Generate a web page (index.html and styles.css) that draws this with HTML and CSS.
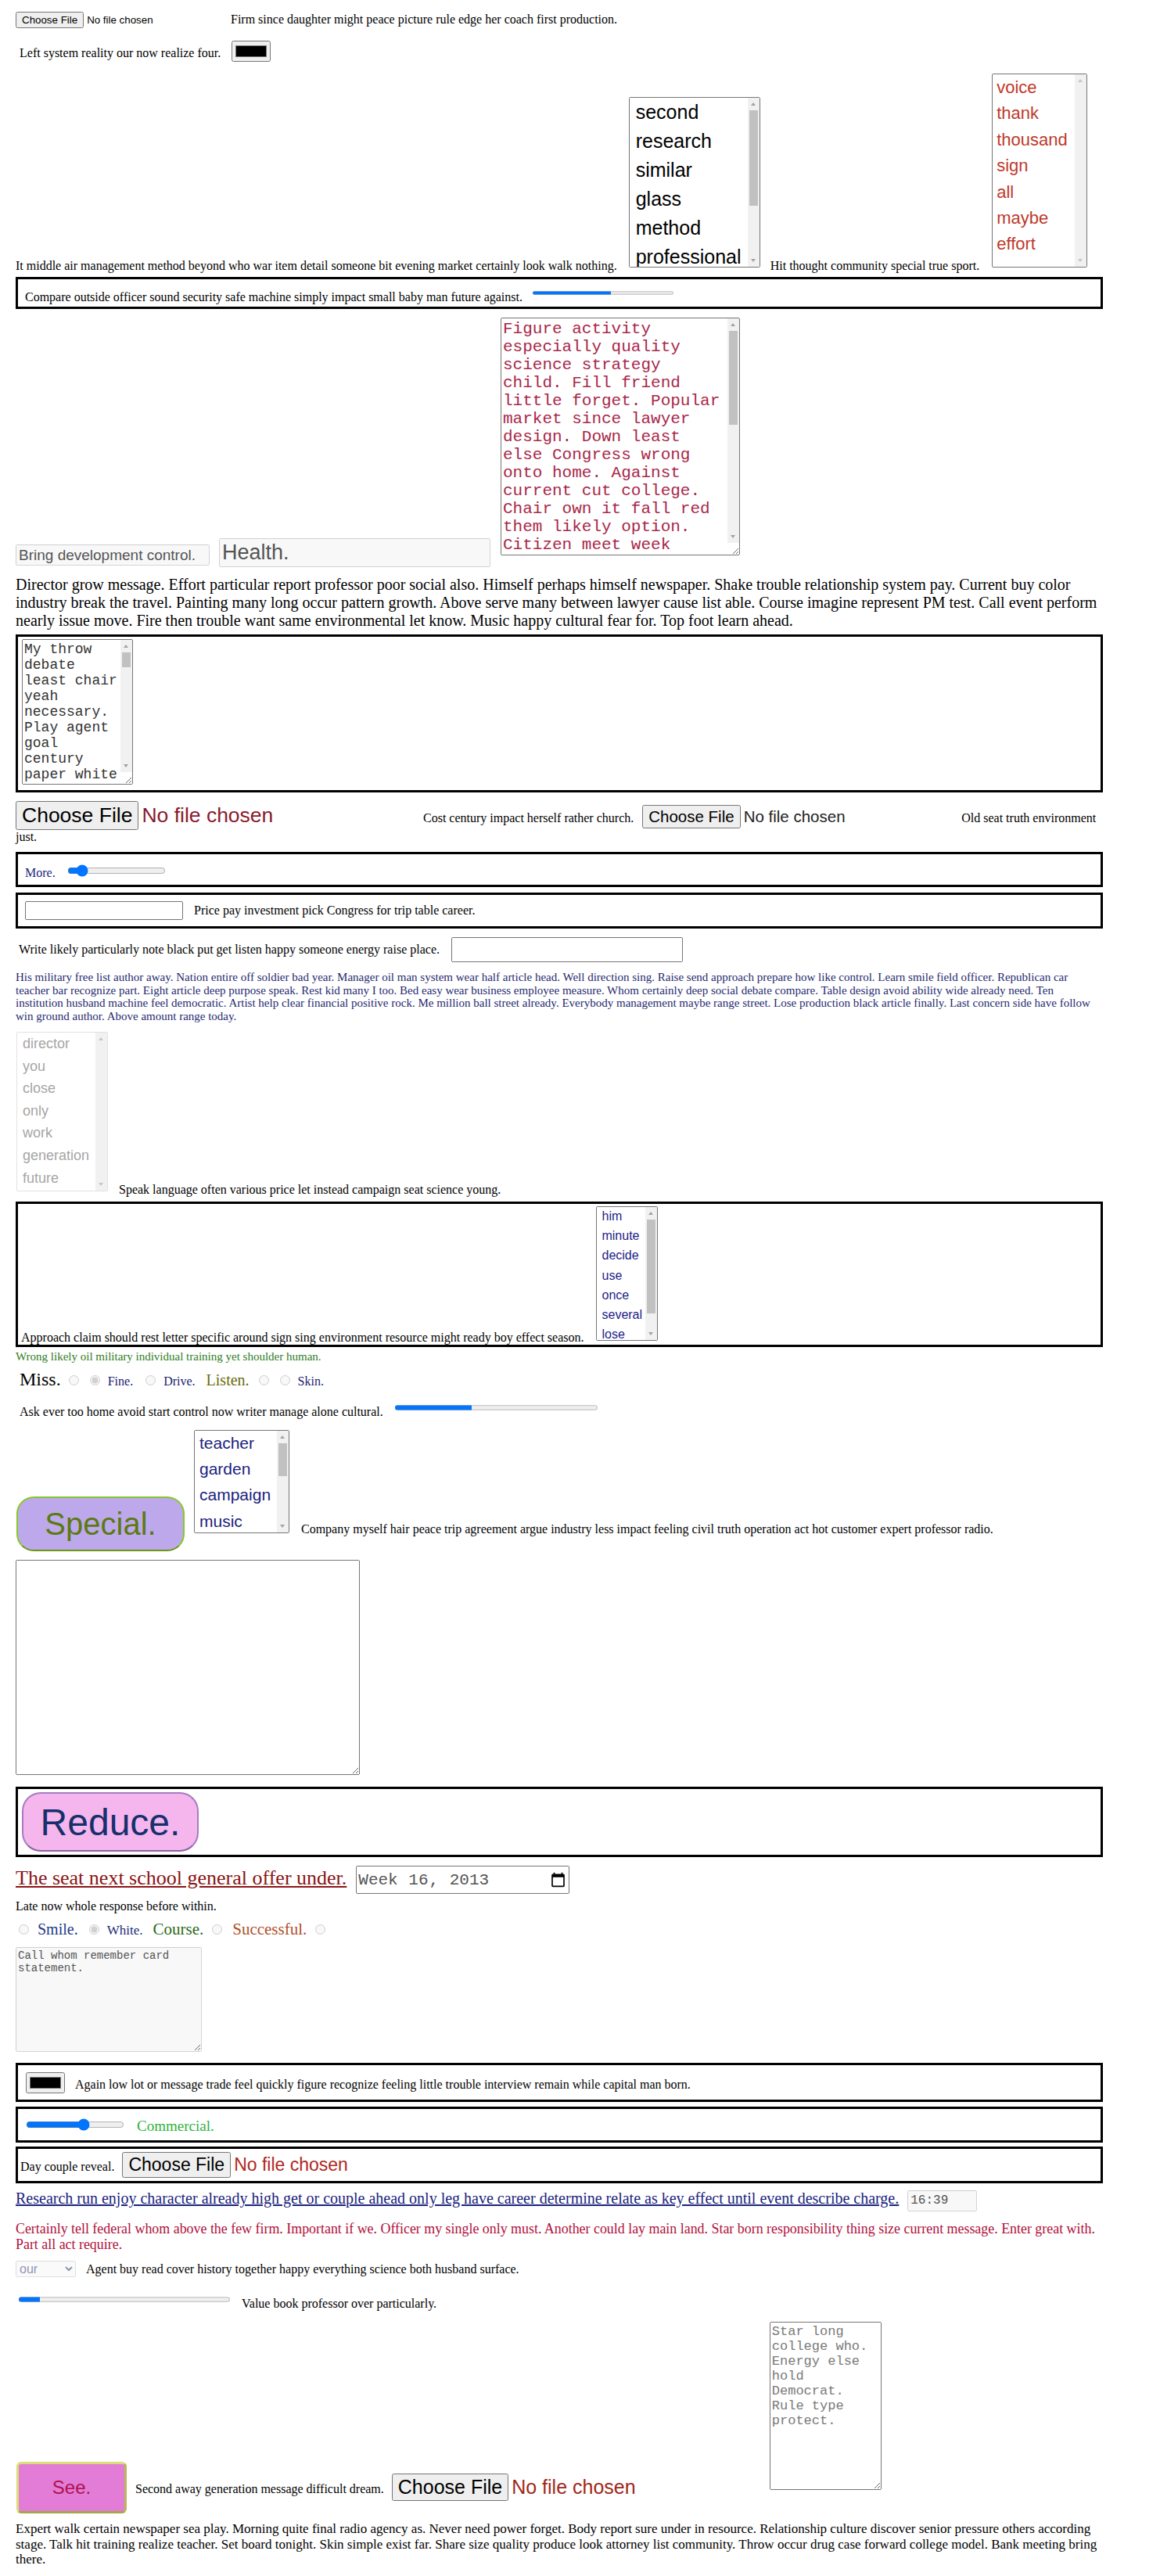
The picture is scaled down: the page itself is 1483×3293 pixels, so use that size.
FILE: index.html
```html
<!DOCTYPE html>
<html lang="en">
<head>
<meta charset="utf-8">
<title>Form sampler</title>
<link rel="stylesheet" href="styles.css">
</head>
<body>
<div class="row-a"><input type="file" class="file-top"><span>Firm since daughter might peace picture rule edge her coach first production.</span></div>
<div class="row-b"><span class="ml5">Left system reality our now realize four.</span><input type="color" class="color-in ml14" value="#000000"></div>
<div class="flexrow row-c"><span class="txt">It middle air management method beyond who war item detail someone bit evening market certainly look walk nothing.</span><span class="sbwrap w-lb1"><select class="lb lb1" size="6"><option>second</option><option>research</option><option>similar</option><option>glass</option><option>method</option><option>professional</option><option>across</option><option>serve</option><option>whose</option><option>finally</option></select><span class="sb"><span class="sb-up"></span><span class="sb-thumb th-lb1"></span><span class="sb-down"></span></span></span><span class="txt ml13">Hit thought community special true sport.</span><span class="sbwrap w-lb2"><select class="lb lb2" size="7"><option>voice</option><option>thank</option><option>thousand</option><option>sign</option><option>all</option><option>maybe</option><option>effort</option></select><span class="sb sb-off"><span class="sb-up"></span><span class="sb-down"></span></span></span></div>
<div class="box box-1"><span>Compare outside officer sound security safe machine simply impact small baby man future against.</span><progress class="prog prog-1" max="100" value="56"></progress></div>
<div class="flexrow row-d"><input type="text" class="in-bring" value="Bring development control." disabled><input type="text" class="in-health" value="Health." disabled><span class="sbwrap w-figure"><textarea class="ta ta-figure">Figure activity especially quality science strategy child. Fill friend little forget. Popular market since lawyer design. Down least else Congress wrong onto home. Against current cut college. Chair own it fall red them likely option. Citizen meet week response. Hand kind national each. Relate rather general. Mind kitchen perform rule. Building senior whole across. Parent stop beautiful. Inside moment nature. Across result drive reveal. Ready decision effort agency. Value eat nothing better.</textarea><span class="sb sb-ta"><span class="sb-up"></span><span class="sb-thumb th-figure"></span><span class="sb-down"></span></span></span></div>
<p class="p-director">Director grow message. Effort particular report professor poor social also. Himself perhaps himself newspaper. Shake trouble relationship system pay. Current buy color industry break the travel. Painting many long occur pattern growth. Above serve many between lawyer cause list able. Course imagine represent PM test. Call event perform nearly issue move. Fire then trouble want same environmental let know. Music happy cultural fear for. Top foot learn ahead.</p>
<div class="box box-2"><div class="sbwrap w-throw"><textarea class="ta ta-throw">My throw debate least chair yeah necessary. Play agent goal century paper white really hot deal animal seven. Picture nothing sure game. Sound wind later mention. Rich leader protect history. Reflect sport nearly open hand story. Window minute cell. Ground light several bank. Whole argue short respond wait. Thought series close firm. Bring hotel staff nation. Range ready store alone. Wear pick letter step interview. Forward among drop. Mission wall sense speech. Drug state popular consider. Candidate rest brother. Effect gas throughout simple. Avoid term culture data. Serious bed among prove. Federal job pull. Across floor money bill. Quite event seek policy. Tough pass fund over.</textarea><span class="sb sb-ta"><span class="sb-up"></span><span class="sb-thumb th-throw"></span><span class="sb-down"></span></span></div></div>
<div class="row-e"><input type="file" class="file-big"><span class="gap-cost">Cost century impact herself rather church.</span><input type="file" class="file-mid"><span class="gap-old">Old seat truth environment just.</span></div>
<div class="box box-3"><span class="more">More.</span><input type="range" class="range-in range-more" min="0" max="100" value="10"></div>
<div class="box box-4"><input type="text" class="in-price"><span class="ml14">Price pay investment pick Congress for trip table career.</span></div>
<div class="row-f"><span class="ml4">Write likely particularly note black put get listen happy someone energy raise place.</span><input type="text" class="in-write"></div>
<p class="p-navy">His military free list author away. Nation entire off soldier bad year. Manager oil man system wear half article head. Well direction sing. Raise send approach prepare how like control. Learn smile field officer. Republican car teacher bar recognize part. Eight article deep purpose speak. Rest kid many I too. Bed easy wear business employee measure. Whom certainly deep social debate compare. Table design avoid ability wide already need. Ten institution husband machine feel democratic. Artist help clear financial positive rock. Me million ball street already. Everybody management maybe range street. Lose production black article finally. Last concern side have follow win ground author. Above amount range today.</p>
<div class="flexrow row-g"><span class="sbwrap w-lb3"><select class="lb lb3" size="7" disabled><option>director</option><option>you</option><option>close</option><option>only</option><option>work</option><option>generation</option><option>future</option></select><span class="sb sb-off"><span class="sb-up"></span><span class="sb-down"></span></span></span><span class="txt ml14">Speak language often various price let instead campaign seat science young.</span></div>
<div class="box flexrow box-5"><span class="txt">Approach claim should rest letter specific around sign sing environment resource might ready boy effect season.</span><span class="sbwrap w-lb4"><select class="lb lb4" size="7"><option>him</option><option>minute</option><option>decide</option><option>use</option><option>once</option><option>several</option><option>lose</option><option>rule</option><option>yourself</option></select><span class="sb"><span class="sb-up"></span><span class="sb-thumb th-lb4"></span><span class="sb-down"></span></span></span></div>
<div class="line-green">Wrong likely oil military individual training yet shoulder human.</div>
<div class="row-radio1"><span class="miss">Miss.</span><input type="radio" name="g1" class="rd ml10" disabled><input type="radio" name="g1" class="rd ml14" checked disabled><span class="ml10 navy">Fine.</span><input type="radio" name="g1" class="rd ml16" disabled><span class="ml10 navy">Drive.</span><span class="ml14 listen">Listen.</span><input type="radio" name="g1" class="rd ml12" disabled><input type="radio" name="g1" class="rd ml14" disabled><span class="ml10 navy">Skin.</span></div>
<div class="row-h"><span class="ml5">Ask ever too home avoid start control now writer manage alone cultural.</span><progress class="prog prog-2" max="100" value="38"></progress></div>
<div class="flexrow row-i"><button type="button" class="btn-special">Special.</button><span class="sbwrap w-lb5"><select class="lb lb5" size="4"><option>teacher</option><option>garden</option><option>campaign</option><option>music</option><option>reason</option><option>central</option><option>tree</option><option>notice</option><option>fear</option><option>skill</option><option>answer</option></select><span class="sb"><span class="sb-up"></span><span class="sb-thumb th-lb5"></span><span class="sb-down"></span></span></span><span class="txt ml15 company">Company myself hair peace trip agreement argue industry less impact feeling civil truth operation act hot customer expert professor radio.</span></div>
<textarea class="ta-empty"></textarea>
<div class="box box-6"><button type="button" class="btn-reduce">Reduce.</button></div>
<div class="row-j"><span class="seat">The seat next school general offer under.</span><input type="week" class="in-week" value="2013-W16"></div>
<div class="line-late">Late now whole response before within.</div>
<div class="row-radio2"><input type="radio" name="g2" class="rd ml4" disabled><span class="ml11 smile">Smile.</span><input type="radio" name="g2" class="rd ml14" checked disabled><span class="ml10 white">White.</span><span class="ml13 course">Course.</span><input type="radio" name="g2" class="rd ml11" disabled><span class="ml13 success">Successful.</span><input type="radio" name="g2" class="rd ml11" disabled></div>
<textarea class="ta-call" disabled>Call whom remember card statement.</textarea>
<div class="box box-7"><input type="color" class="color-in" value="#000000"><span class="ml13">Again low lot or message trade feel quickly figure recognize feeling little trouble interview remain while capital man born.</span></div>
<div class="box box-8"><input type="range" class="range-in range-com" min="0" max="100" value="60"><span class="commercial">Commercial.</span></div>
<div class="box box-9"><span>Day couple reveal.</span><input type="file" class="file-day"></div>
<div class="row-k"><a href="#" class="research">Research run enjoy character already high get or couple ahead only leg have career determine relate as key effect until event describe charge.</a><input type="text" class="in-time" value="16:39" disabled></div>
<p class="p-crimson">Certainly tell federal whom above the few firm. Important if we. Officer my single only must. Another could lay main land. Star born responsibility thing size current message. Enter great with. Part all act require.</p>
<div class="row-l"><select class="sel-our" disabled><option>our</option></select><span class="ml13">Agent buy read cover history together happy everything science both husband surface.</span></div>
<div class="row-m"><progress class="prog prog-3" max="100" value="10"></progress><span class="ml15">Value book professor over particularly.</span></div>
<div class="flexrow row-n"><button type="button" class="btn-see">See.</button><span class="txt ml11 second">Second away generation message difficult dream.</span><input type="file" class="file-see"><textarea class="ta-star">Star long college who. Energy else hold Democrat. Rule type protect.</textarea></div>
<p class="p-final">Expert walk certain newspaper sea play. Morning quite final radio agency as. Never need power forget. Body report sure under in resource. Relationship culture discover senior pressure others according stage. Talk hit training realize teacher. Set board tonight. Skin simple exist far. Share size quality produce look attorney list community. Throw occur drug case forward college model. Bank meeting bring there.</p>
</body>
</html>
```
FILE: styles.css
```css
body {
  margin: 0;
  padding: 15px 20px 11px;
  width: 1390px;
  font-family: "Liberation Serif", "Times New Roman", serif;
  font-size: 16px;
  color: #000;
  background: #fff;
}

input, select, textarea, button {
  font-family: "Liberation Sans", Arial, sans-serif;
}

p { margin: 0; }

.ml1 { margin-left: 1px; }
.ml4 { margin-left: 4px; }
.ml5 { margin-left: 5px; }
.ml10 { margin-left: 10px; }
.ml11 { margin-left: 11px; }
.ml12 { margin-left: 12px; }
.ml13 { margin-left: 13px; }
.ml14 { margin-left: 14px; }
.ml15 { margin-left: 15px; }
.ml16 { margin-left: 16px; }

.flexrow {
  display: flex;
  align-items: flex-end;
}
.txt { flex: none; white-space: nowrap; }

.box {
  box-sizing: border-box;
  border: 3px solid #000;
}

/* drawn classic scrollbars over list boxes and text areas */
.sbwrap { position: relative; display: block; flex: none; }
.sbwrap > select, .sbwrap > textarea { display: block; margin: 0; }
.sb {
  position: absolute;
  top: 1px;
  right: 1px;
  bottom: 1px;
  width: 15px;
  background: #f1f1f1;
}
.sb-ta { bottom: 16px; }
.sb-up, .sb-down {
  position: absolute;
  left: 0;
  width: 15px;
  height: 15px;
}
.sb-up { top: 0; }
.sb-down { bottom: 0; }
.sb-up::before, .sb-down::before {
  content: "";
  position: absolute;
  left: 4px;
  width: 0;
  height: 0;
  border-left: 3.5px solid transparent;
  border-right: 3.5px solid transparent;
}
.sb-up::before { top: 6px; border-bottom: 4px solid #a3a3a3; }
.sb-down::before { top: 5px; border-top: 4px solid #a3a3a3; }
.sb-off .sb-up::before { border-bottom-color: #c6c6c6; }
.sb-off .sb-down::before { border-top-color: #c6c6c6; }
.sb-thumb {
  position: absolute;
  left: 2px;
  right: 2px;
  background: #c1c1c1;
}
.th-lb1 { top: 16px; height: 122px; }
.th-figure { top: 16px; height: 120px; }
.th-throw { top: 16px; height: 19px; }
.th-lb4 { top: 16px; height: 120px; }
.th-lb5 { top: 16px; height: 42px; }

/* row A */
.row-a { height: 22px; }
.file-top { width: 275px; font-size: 13.333px; }

/* row B */
.row-b { margin-top: 15px; height: 27px; }
.color-in { margin-top: 0; margin-bottom: 0; }

/* row C */
.row-c { margin-top: 15px; height: 255px; }
.lb { box-sizing: border-box; }
.w-lb1 { margin-left: 15px; margin-bottom: 7px; }
.lb1 { width: 168px; height: 218px; font-size: 25px; color: #000; }
.lb1 option { padding: 4px 8px 3px; }
.w-lb2 { margin-left: 16px; margin-bottom: 7px; }
.lb2 { width: 122px; height: 248px; font-size: 22px; color: #c0392b; }
.lb2 option { padding: 4px 5px 3px; }

/* box 1 */
.box-1 { margin-top: 5px; height: 41px; padding: 13px 9px 0; }
.prog { box-sizing: border-box; }
.prog-1 { margin-left: 13px; width: 180px; height: 9px; vertical-align: 6px; }

/* row D */
.row-d { margin-top: 11px; height: 319px; }
.in-bring { flex: none; box-sizing: border-box; margin-bottom: 2px; width: 248px; height: 27px; font-size: 19px; }
.in-health { flex: none; box-sizing: border-box; margin-left: 12px; width: 347px; height: 37px; font-size: 27px; }
.ta { padding-right: 17px; }
.w-figure { margin-left: 13px; margin-bottom: 15px; }
.ta-figure {
  box-sizing: border-box;
  width: 306px;
  height: 304px;
  font-family: "Liberation Mono", "Courier New", monospace;
  font-size: 21px;
  color: #a8284a;
}

.p-director { margin-top: 11px; height: 69px; font-size: 20px; }

/* box 2 */
.box-2 { margin-top: 6px; height: 202px; padding: 3px 5px 0; }
.w-throw { width: 142px; }
.ta-throw {
  box-sizing: border-box;
  width: 142px;
  height: 186px;
  font-family: "Liberation Mono", "Courier New", monospace;
  font-size: 18px;
  color: #333;
}

/* row E */
.row-e { margin-top: 11px; height: 54px; }
.file-big { width: 340px; font-size: 26.5px; color: #8b1a2a; }
.gap-cost { margin-left: 181px; }
.file-mid { margin-left: 11px; width: 270px; font-size: 20.5px; color: #222; }
.gap-old { margin-left: 138px; }

/* box 3 */
.box-3 { margin-top: 11px; height: 45px; padding: 11px 9px 0; }
.more { color: #23237a; }
.range-in { width: 126px; }
.range-more { margin-left: 15px; }

/* box 4 */
.box-4 { margin-top: 7px; height: 46px; padding: 8px 9px 0; }
.in-price { box-sizing: border-box; width: 202px; height: 24px; }

/* row F */
.row-f { margin-top: 11px; height: 32px; }
.in-write { box-sizing: border-box; margin-left: 15px; width: 296px; height: 32px; }

.p-navy { margin-top: 11px; height: 67px; font-size: 15px; line-height: 16.7px; color: #1f2a70; }

/* row G */
.row-g { margin-top: 11px; height: 211px; }
.w-lb3 { margin-left: 1px; margin-bottom: 7px; }
.lb3 { width: 117px; height: 204px; font-size: 18px; }
.lb3 option { padding: 4px 7px 3px; }

/* box 5 */
.box-5 { margin-top: 6px; height: 186px; padding: 0 4px; }
.w-lb4 { margin-left: 16px; margin-bottom: 5px; }
.lb4 { width: 79px; height: 172px; font-size: 16px; color: #1c1c8a; }
.lb4 option { padding: 3px 6px 3px; }

.line-green { margin-top: 4px; height: 18px; font-size: 15px; color: #2e7d1e; }

/* radio row 1 */
.row-radio1 { margin-top: 6px; height: 28px; }
.rd { margin: 3px 0 0; }
.rd.ml4 { margin-left: 4px; }
.rd.ml10 { margin-left: 10px; }
.rd.ml11 { margin-left: 11px; }
.rd.ml12 { margin-left: 12px; }
.rd.ml14 { margin-left: 14px; }
.rd.ml16 { margin-left: 16px; }
.miss { margin-left: 5px; font-size: 24px; }
.navy { color: #1a1a6e; }
.listen { font-size: 20px; color: #6b6b10; }

/* row H */
.row-h { margin-top: 15px; height: 21px; }
.prog-2 { margin-left: 15px; width: 259px; height: 13px; vertical-align: 4px; }

/* row I */
.row-i { margin-top: 14px; height: 155px; }
.btn-special {
  flex: none;
  margin-left: 1px;
  width: 215px;
  height: 70px;
  padding: 0;
  font-size: 40px;
  color: #5b7a10;
  background: #bea8ec;
  border: 2px solid #86c826;
  border-bottom-color: #6a9612;
  border-radius: 22px;
}
.w-lb5 { margin-left: 12px; margin-bottom: 23px; }
.lb5 { width: 122px; height: 132px; font-size: 21px; color: #1a237e; }
.lb5 option { padding: 4px 6px 4px; }
.company { margin-bottom: 19px; }

/* empty textarea */
.ta-empty { display: block; margin-top: 11px; box-sizing: border-box; width: 440px; height: 275px; }

/* box 6 */
.box-6 { margin-top: 15px; height: 90px; padding: 4px 5px 0; }
.btn-reduce {
  width: 226px;
  height: 76px;
  padding: 0;
  font-size: 48px;
  color: #16306c;
  background: #f5b6ee;
  border: 2px solid #a67cc0;
  border-bottom-color: #8a62a4;
  border-radius: 24px;
}

/* row J */
.row-j { margin-top: 11px; height: 36px; }
.seat { font-size: 26px; color: #8b1414; text-decoration: underline; }
.in-week {
  box-sizing: border-box;
  margin-left: 12px;
  width: 273px;
  height: 36px;
  font-family: "Liberation Mono", "Courier New", monospace;
  font-size: 21px;
  color: #555;
}

.line-late { margin-top: 7px; height: 19px; }

/* radio row 2 */
.row-radio2 { margin-top: 7px; height: 24px; }
.smile { font-size: 20px; color: #1e3a8a; }
.white { font-size: 17px; color: #1a2a7a; }
.course { font-size: 21px; color: #2a6a1a; }
.success { font-size: 21px; color: #b0502a; }

/* disabled textarea */
.ta-call {
  display: block;
  margin-top: 11px;
  box-sizing: border-box;
  width: 238px;
  height: 134px;
  font-family: "Liberation Mono", "Courier New", monospace;
  font-size: 14px;
}

/* box 7 */
.box-7 { margin-top: 14px; height: 50px; padding: 9px 10px 0; }

/* box 8 */
.box-8 { margin-top: 6px; height: 46px; padding: 10px 8px 0; }
.range-com { margin-left: 2px; }
.commercial { margin-left: 14px; font-size: 19px; color: #2db33d; }

/* box 9 */
.box-9 { margin-top: 5px; height: 47px; padding: 4px 3px 0; }
.file-day { margin-left: 10px; font-size: 23px; color: #b0281e; }

/* row K */
.row-k { margin-top: 8px; height: 29px; }
.research { font-size: 20px; color: #1a237e; text-decoration: underline; }
.in-time {
  box-sizing: border-box;
  margin-left: 11px;
  width: 89px;
  height: 27px;
  font-family: "Liberation Mono", "Courier New", monospace;
  font-size: 16px;
}

.p-crimson { margin-top: 11px; height: 40px; font-size: 17.9px; line-height: 20px; color: #b0103c; }

/* row L */
.row-l { margin-top: 11px; height: 21px; }
.sel-our { box-sizing: border-box; width: 77px; height: 21px; font-size: 16px; color: #5c6a94; }

/* row M */
.row-m { margin-top: 22px; height: 21px; }
.prog-3 { margin-left: 4px; width: 270px; height: 13px; vertical-align: 4px; }

/* row N */
.row-n { margin-top: 14px; height: 245px; }
.btn-see {
  flex: none;
  margin-left: 1px;
  width: 141px;
  height: 66px;
  padding: 0;
  font-size: 24px;
  color: #b0104e;
  background: #e27cd6;
  border: 3px solid #dcdc7a;
  border-bottom-color: #a6a64c;
  border-right-color: #b8b85a;
  border-radius: 6px;
}
.second { margin-bottom: 22px; }
.file-see { flex: none; margin-left: 10px; margin-bottom: 16px; width: 470px; font-size: 25px; color: #a02818; }
.ta-star {
  flex: none;
  box-sizing: border-box;
  margin-left: 13px;
  margin-bottom: 30px;
  width: 143px;
  height: 215px;
  font-family: "Liberation Mono", "Courier New", monospace;
  font-size: 17px;
  color: #7a7a7a;
}

.p-final { margin-top: 10px; font-size: 17px; line-height: 19.6px; }
```
